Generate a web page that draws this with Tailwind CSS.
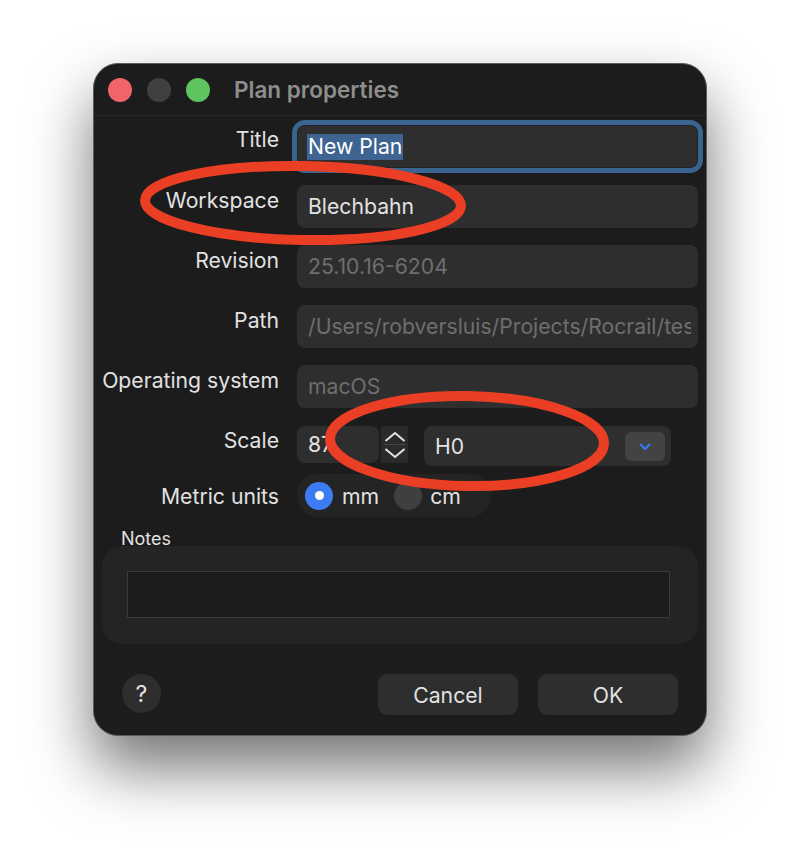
<!DOCTYPE html>
<html lang="en">
<head>
  <meta charset="UTF-8" />
  <title>Plan properties</title>
  <script src="https://cdn.jsdelivr.net/npm/@tailwindcss/browser@4"></script>
</head>
<body class="bg-white font-['Inter','Liberation_Sans',sans-serif]">
  <div class="w-[800px] h-[860px] pt-[63px] pl-[93px] overflow-hidden">
    <!-- Dialog window -->
    <div class="relative w-[614px] h-[673px] rounded-[25px] bg-[#1c1c1c] border border-[#5c5c5c] shadow-[0_32px_62px_rgba(0,0,0,0.55)] flex flex-col text-[21.2px] text-[#e2e2e2]">
      <!-- Title bar -->
      <div class="h-[52px] shrink-0 flex items-center pl-[14px] border-b border-[#262626]">
        <span class="w-[24px] h-[24px] rounded-full bg-[#f2646a]"></span>
        <span class="w-[24px] h-[24px] rounded-full bg-[#404040] ml-[15px]"></span>
        <span class="w-[24px] h-[24px] rounded-full bg-[#5ec45f] ml-[15px]"></span>
        <span class="ml-[24px] pt-px text-[22.5px] font-semibold text-[#8e8e8e]">Plan properties</span>
      </div>

      <!-- Text fields -->
      <div class="flex flex-col gap-[17px] pt-[9px] pl-[8px]">
        <div class="flex h-[43px]">
          <label class="w-[177px] text-right -mt-px">Title</label>
          <div class="ml-[18px] w-[401px] h-[43px] rounded-[8px] bg-[#2e2e2e] flex items-center pl-[10px] outline-[5px] outline-[#38648f] shadow-[inset_0_0_0_1px_#222]">
            <span class="bg-[#3f6491] text-white h-[26px] leading-[25px] px-px">New Plan</span>
          </div>
        </div>
        <div class="flex h-[43px]">
          <label class="w-[177px] text-right">Workspace</label>
          <div class="ml-[18px] w-[401px] h-[43px] rounded-[8px] bg-[#2e2e2e] flex items-center pl-[11px]">Blechbahn</div>
        </div>
        <div class="flex h-[43px]">
          <label class="w-[177px] text-right">Revision</label>
          <div class="ml-[18px] w-[401px] h-[43px] rounded-[8px] bg-[#2e2e2e] flex items-center pl-[11px] text-[#6e6e6e]">25.10.16-6204</div>
        </div>
        <div class="flex h-[43px]">
          <label class="w-[177px] text-right">Path</label>
          <div class="ml-[18px] w-[401px] h-[43px] rounded-[8px] bg-[#2e2e2e] flex items-center pl-[11px] text-[#6e6e6e]">
            <span class="w-[383px] overflow-hidden whitespace-nowrap">/Users/robversluis/Projects/Rocrail/tests</span>
          </div>
        </div>
        <div class="flex h-[43px]">
          <label class="w-[177px] text-right">Operating system</label>
          <div class="ml-[18px] w-[401px] h-[43px] rounded-[8px] bg-[#2e2e2e] flex items-center pl-[11px] text-[#6e6e6e]">macOS</div>
        </div>
      </div>

      <!-- Scale -->
      <div class="flex items-start h-[40px] mt-[18px] pl-[8px]">
        <label class="w-[177px] text-right -mt-px">Scale</label>
        <div class="ml-[18px] w-[82px] h-[37px] rounded-[8px] bg-[#2e2e2e] flex items-center pl-[11px]">87</div>
        <div class="ml-[2px] w-[27px] h-[37px] bg-[#2a2a2a] flex flex-col items-center justify-center gap-[2px]">
          <svg width="22" height="12" viewBox="0 0 22 12" fill="none" stroke="#e2e2e2" stroke-width="2"><path d="M1.5 11 L11 3 L20.5 11"/></svg>
          <div class="w-[22px] h-px bg-[#444]"></div>
          <svg width="22" height="12" viewBox="0 0 22 12" fill="none" stroke="#e2e2e2" stroke-width="2"><path d="M1.5 2 L11 10 L20.5 2"/></svg>
        </div>
        <div class="ml-[16px] w-[247px] h-[40px] rounded-[8px] bg-[#2e2e2e] flex items-center justify-between pl-[11px] pr-[6px]">
          <span class="pt-px">H0</span>
          <span class="w-[40px] h-[29px] rounded-[6px] bg-[#434343] flex items-center justify-center">
            <svg width="14" height="9" viewBox="0 0 14 9" fill="none" stroke="#3478f6" stroke-width="2.2"><path d="M2 2 L7 7 L12 2"/></svg>
          </span>
        </div>
      </div>

      <!-- Metric units -->
      <div class="flex items-center h-[43px] mt-[8px] pl-[8px]">
        <label class="w-[177px] text-right pt-[3px]">Metric units</label>
        <div class="ml-[18px] w-[194px] h-[43px] rounded-[21px] bg-[#242424] flex items-center pl-[8px]">
          <span class="w-[28px] h-[28px] rounded-full bg-[#3b7cf5] flex items-center justify-center"><span class="w-[9px] h-[9px] rounded-full bg-white"></span></span>
          <span class="ml-[9px] pt-[3px]">mm</span>
          <span class="ml-[15px] w-[28px] h-[28px] rounded-full bg-[#3f3f3f]"></span>
          <span class="ml-[8px] pt-[3px]">cm</span>
        </div>
      </div>

      <!-- Notes -->
      <div class="pl-[27px] mt-[8px] pt-[2px] text-[18px] leading-[24px]">Notes</div>
      <div class="ml-[8px] -mt-[5px] h-[98px] w-[596px] rounded-[20px] bg-[#242424] pt-[25px] pl-[25px]">
        <div class="w-[543px] h-[47px] bg-[#1c1c1c] border border-[#3a3a3a]"></div>
      </div>

      <!-- Buttons -->
      <div class="flex items-start mt-[30px] pl-[28px]">
        <button class="w-[39px] h-[39px] rounded-full bg-[#2e2e2e] text-[23px] pt-px">?</button>
        <button class="ml-[217px] w-[140px] h-[41px] rounded-[9px] bg-[#2e2e2e] pt-[2px]">Cancel</button>
        <button class="ml-[20px] w-[140px] h-[41px] rounded-[9px] bg-[#2e2e2e] pt-[2px]">OK</button>
      </div>

      <!-- Red annotation circles drawn over the dialog -->
      <svg class="absolute -left-px -top-px pointer-events-none" width="614" height="673" viewBox="0 0 614 673" fill="none" stroke="#ea3f24" stroke-width="10">
        <ellipse cx="210" cy="140" rx="158" ry="37" transform="rotate(1 210 140)"/>
        <ellipse cx="374" cy="378" rx="137" ry="45" transform="rotate(1 374 378)"/>
      </svg>
    </div>
  </div>
</body>
</html>
